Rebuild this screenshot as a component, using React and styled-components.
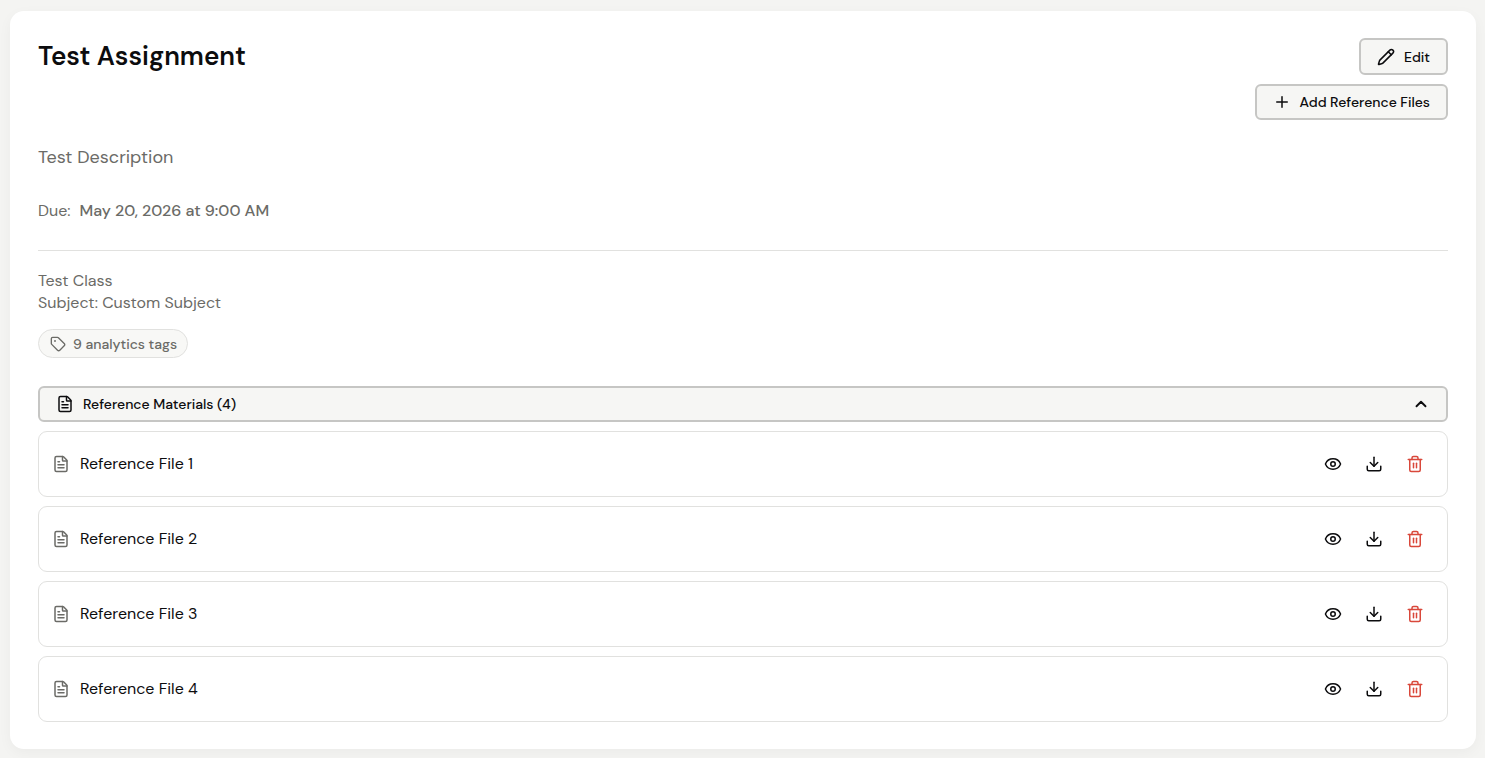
import React, {useState} from 'react';
import styled, {createGlobalStyle} from 'styled-components';
import {
  ChevronDown,
  ChevronUp,
  Download,
  Eye,
  FileText,
  Pencil,
  Plus,
  Tag,
  Trash2
} from 'lucide-react';

const colors = {
  page: '#f4f4f2',
  card: '#ffffff',
  control: '#f6f6f4',
  controlBorder: '#c6c6c4',
  border: '#e1e1df',
  text: '#0c0c0e',
  faded: '#6b6b67',
  danger: '#d9483b'
};

const GlobalStyle = createGlobalStyle`
  * {
    box-sizing: border-box;
  }

  body {
    margin: 0;
    background: ${colors.page};
    color: ${colors.text};
    font-family: 'DM Sans', Inter, 'Liberation Sans', sans-serif;
    font-size: 16px;
  }
`;

const Page = styled.main`
  padding: 11px 9px 9px 10px;
`;

const Card = styled.article`
  padding: 27px 28px;
  background: ${colors.card};
  border-radius: 14px;
  box-shadow: 0 4px 14px rgba(0, 0, 0, 0.04);
`;

const Header = styled.header`
  display: flex;
  justify-content: space-between;
  align-items: flex-start;
`;

const Title = styled.h1`
  margin: 0;
  font-size: 26px;
  font-weight: 600;
  line-height: 36px;
`;

const Actions = styled.div`
  display: flex;
  flex-direction: column;
  align-items: flex-end;
  gap: 9px;
`;

const Button = styled.button`
  display: flex;
  align-items: center;
  gap: 9px;
  width: ${props => props.$wide ? '100%' : 'auto'};
  height: ${props => props.$tall ? '37px' : '36px'};
  padding: 0 16px;
  border: 2px solid ${colors.controlBorder};
  border-radius: 6px;
  background: ${colors.control};
  color: ${colors.text};
  font-family: inherit;
  font-size: 14px;
  font-weight: 500;
  cursor: pointer;
`;

const ButtonLabel = styled.span`
  flex: 1;
  text-align: left;
`;

const Description = styled.p`
  margin: 24px 0 29px;
  color: ${colors.faded};
  font-size: 18px;
  line-height: 26px;
`;

const Due = styled.p`
  display: flex;
  gap: 9px;
  margin: 0;
  padding-bottom: 27px;
  border-bottom: 1px solid ${colors.border};
  color: ${colors.faded};
  line-height: 24px;
`;

const DueDate = styled.time`
  font-weight: 500;
`;

const Meta = styled.div`
  margin: 19px 0 15px;
  color: ${colors.faded};
  line-height: 22px;
`;

const TagCount = styled.div`
  display: inline-flex;
  align-items: center;
  gap: 7px;
  height: 29px;
  margin-bottom: 28px;
  padding: 0 10px 0 11px;
  border: 1px solid ${colors.border};
  border-radius: 15px;
  background: #f8f8f6;
  color: ${colors.faded};
  font-size: 14px;
  font-weight: 500;
  line-height: 18px;
`;

const FileList = styled.ul`
  display: flex;
  flex-direction: column;
  gap: 9px;
  margin: 9px 0 0;
  padding: 0;
  list-style: none;
`;

const FileRow = styled.li`
  display: flex;
  align-items: center;
  gap: 10px;
  padding: 13px 14px 13px 13px;
  border: 1px solid ${colors.border};
  border-radius: 9px;
`;

const FileIcon = styled(FileText)`
  color: ${colors.faded};
`;

const FileName = styled.span`
  flex: 1;
  line-height: 22px;
`;

const FileActions = styled.div`
  display: flex;
  gap: 5px;
`;

const IconButton = styled.button`
  display: flex;
  align-items: center;
  justify-content: center;
  width: 36px;
  height: 38px;
  padding: 0;
  border: 0;
  border-radius: 6px;
  background: transparent;
  color: ${props => props.$danger ? colors.danger : colors.text};
  cursor: pointer;
`;

const files = ['Reference File 1', 'Reference File 2', 'Reference File 3', 'Reference File 4'];

const ReferenceFile = ({name}) => (
  <FileRow>
    <FileIcon size={18} />
    <FileName>{name}</FileName>
    <FileActions>
      <IconButton type="button" aria-label={`View ${name}`}>
        <Eye size={18} />
      </IconButton>
      <IconButton type="button" aria-label={`Download ${name}`}>
        <Download size={18} />
      </IconButton>
      <IconButton type="button" aria-label={`Delete ${name}`} $danger>
        <Trash2 size={18} />
      </IconButton>
    </FileActions>
  </FileRow>
);

const App = () => {
  const [open, setOpen] = useState(true);
  const Chevron = open ? ChevronUp : ChevronDown;

  return (
    <Page>
      <GlobalStyle />
      <Card>
        <Header>
          <Title>Test Assignment</Title>
          <Actions>
            <Button type="button" $tall>
              <Pencil size={18} />
              Edit
            </Button>
            <Button type="button">
              <Plus size={18} />
              Add Reference Files
            </Button>
          </Actions>
        </Header>
        <Description>Test Description</Description>
        <Due>
          Due:
          <DueDate dateTime="2026-05-20T09:00">May 20, 2026 at 9:00 AM</DueDate>
        </Due>
        <Meta>
          <div>Test Class</div>
          <div>Subject: Custom Subject</div>
        </Meta>
        <TagCount>
          <Tag size={16} />
          9 analytics tags
        </TagCount>
        <Button type="button" $wide aria-expanded={open} onClick={() => setOpen(!open)}>
          <FileText size={18} />
          <ButtonLabel>Reference Materials (4)</ButtonLabel>
          <Chevron size={18} strokeWidth={2.5} />
        </Button>
        {open && (
          <FileList>
            {files.map(name => <ReferenceFile key={name} name={name} />)}
          </FileList>
        )}
      </Card>
    </Page>
  );
};

export default App;
